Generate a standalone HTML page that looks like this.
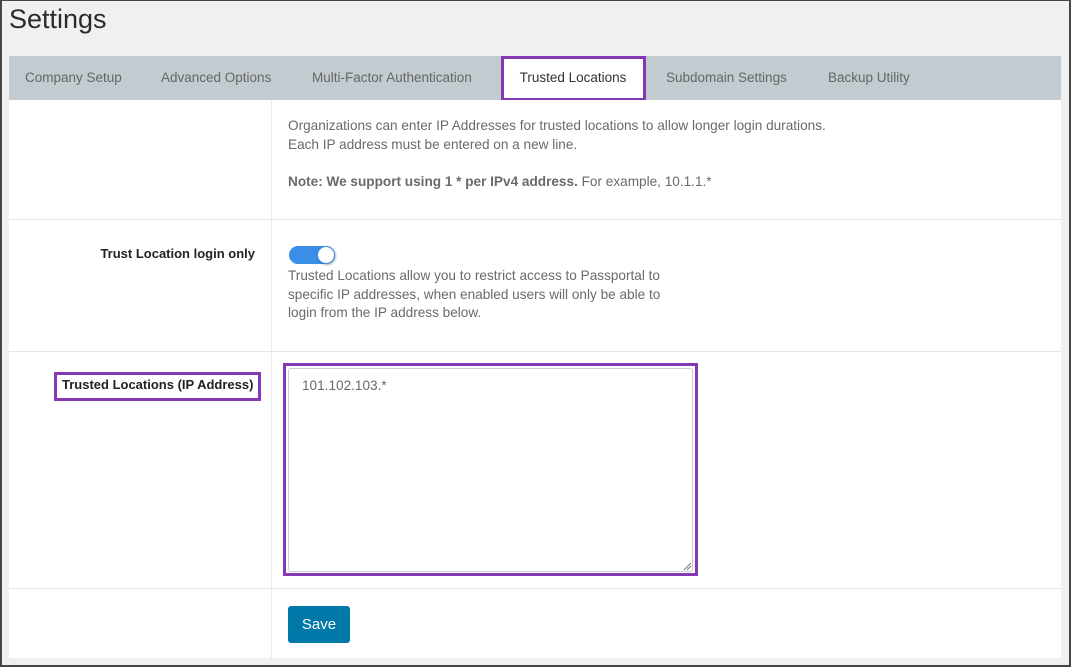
<!DOCTYPE html>
<html><head><meta charset="utf-8"><style>
*{box-sizing:border-box;margin:0;padding:0}
body{width:1071px;height:667px;overflow:hidden;background:#f0f0f0;font-family:"Liberation Sans",sans-serif;position:relative}
.frame{position:absolute;left:0;top:0;width:1071px;height:667px;border:2px solid #454545;border-top-width:1px;border-right-width:2px;z-index:10;pointer-events:none}
.abs{position:absolute}
h1{position:absolute;left:9px;top:4px;font-weight:normal;font-size:27px;color:#2b2b2b}
.tabs{position:absolute;left:9px;top:56px;width:1052px;height:44px;background:#c1cbd0}
.tab{position:absolute;top:0;line-height:44px;font-size:13.5px;color:#666}
.content{position:absolute;left:9px;top:100px;width:1052px;height:558px;background:#fff}
.vline{position:absolute;left:271px;top:100px;width:1px;height:558px;background:#ebebeb}
.hline{position:absolute;left:9px;width:1052px;height:1px;background:#e6e6e6}
.txt{position:absolute;font-size:13.6px;color:#6a6a6a;line-height:18.5px;white-space:nowrap}
.lbl{position:absolute;font-size:13px;color:#222;font-weight:bold}
.purple{position:absolute;border:3px solid #8438b5}
</style></head><body>
<div class="frame"></div>
<h1>Settings</h1>
<div class="tabs">
<div class="tab" style="left:16px">Company Setup</div>
<div class="tab" style="left:152px">Advanced Options</div>
<div class="tab" style="left:303px">Multi-Factor Authentication</div>
<div class="tab" style="left:492px;width:144px;background:#fff;color:#333;text-align:center">Trusted Locations</div>
<div class="tab" style="left:657px">Subdomain Settings</div>
<div class="tab" style="left:819px">Backup Utility</div>
</div>
<div class="purple" style="left:501px;top:56px;width:145px;height:45px"></div>
<div class="content"></div>
<div class="vline"></div>
<div class="hline" style="top:219px"></div>
<div class="hline" style="top:351px"></div>
<div class="hline" style="top:588px"></div>
<div class="txt" style="left:288px;top:117px">Organizations can enter IP Addresses for trusted locations to allow longer login durations.<br>Each IP address must be entered on a new line.</div>
<div class="txt" style="left:288px;top:173px"><b>Note: We support using 1 * per IPv4 address.</b> For example, 10.1.1.*</div>
<div class="lbl" style="right:816px;top:246px">Trust Location login only</div>
<div class="abs" style="left:289px;top:246px;width:46px;height:18px;border-radius:9px;background:#3a8ee6"></div>
<div class="abs" style="left:317px;top:246px;width:18px;height:18px;border-radius:50%;background:#fff;border:1px solid #3a8ee6;box-shadow:1px 1px 2px rgba(0,0,0,.3)"></div>
<div class="txt" style="left:288px;top:267px">Trusted Locations allow you to restrict access to Passportal to<br>specific IP addresses, when enabled users will only be able to<br>login from the IP address below.</div>
<div class="purple" style="left:54px;top:372px;width:207px;height:29px"></div>
<div class="lbl" style="left:62px;top:377px">Trusted Locations (IP Address)</div>
<div class="purple" style="left:283px;top:363px;width:415px;height:213px"></div>
<div class="abs" style="left:288px;top:368px;width:405px;height:204px;border:1px solid #ccc;border-radius:3px;background:#fff"></div>
<div class="txt" style="left:302px;top:377px">101.102.103.*</div>
<svg class="abs" style="left:683px;top:562px" width="9" height="9"><path d="M1 8L8 1M4 8L8 4" stroke="#777" stroke-width="1"/></svg>
<div class="abs" style="left:288px;top:606px;width:62px;height:37px;background:#0079a9;border-radius:3px;color:#fff;font-size:15px;line-height:37px;text-align:center">Save</div>
</body></html>
